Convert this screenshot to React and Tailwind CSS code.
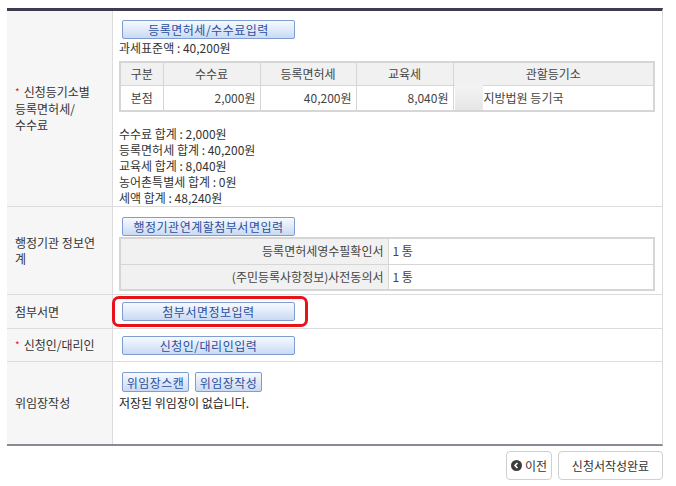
import React from "react";

const font = { fontFamily: '"Noto Sans CJK KR", "Noto Sans", sans-serif' };

function BlueBtn({ children, className = "" }) {
  return (
    <button
      className={`block h-[19px] border border-[#7f9dd0] rounded-[2px] bg-gradient-to-b from-[#f7faff] to-[#c9daf3] text-[12px] leading-[17px] text-[#2b4f9c] tracking-[0.5px] ${className}`}
    >
      {children}
    </button>
  );
}

function Star() {
  return <span className="text-[#e0262b] text-[10px] mr-[4px] relative -top-[1px]">*</span>;
}

function Row({ label, children, className = "", last }) {
  return (
    <div className={`grid grid-cols-[106px_1fr] ${last ? "" : "border-b border-[#dcdcdc]"} ${className}`}>
      <div className="bg-[#f6f6f6] border-r border-[#dcdcdc] flex items-center px-[8px] text-[12px] leading-[16px] text-[#333]">
        {label}
      </div>
      <div className="px-[6px] text-[12px] leading-[16px]">{children}</div>
    </div>
  );
}

export default function App() {
  const sums = [
    "수수료 합계 : 2,000원",
    "등록면허세 합계 : 40,200원",
    "교육세 합계 : 8,040원",
    "농어촌특별세 합계 : 0원",
    "세액 합계 : 48,240원",
  ];

  return (
    <div className="w-[676px] h-[486px] bg-white pt-[8px] pl-[7px] text-[#333]" style={font}>
      <div className="w-[656px] border-t-[3px] border-t-[#3d3d4f] border-b-2 border-b-[#8a8a92] border-r border-r-[#dcdcdc]">
        <Row label={<span><Star />신청등기소별<br />등록면허세/<br />수수료</span>} className="h-[196px]">
          <div className="pt-[9px]">
            <BlueBtn className="ml-[3px] w-[173px]">등록면허세/수수료입력</BlueBtn>
            <div className="mt-[1px]">과세표준액 : 40,200원</div>
            <table className="mt-[5px] w-[536px] border-2 border-[#d6d6d6] border-collapse text-[#444]">
              <thead>
                <tr className="bg-[#f1f1f1] h-[23px]">
                  <th className="font-normal border border-[#d6d6d6] w-[43px]">구분</th>
                  <th className="font-normal border border-[#d6d6d6] w-[97px]">수수료</th>
                  <th className="font-normal border border-[#d6d6d6] w-[96px]">등록면허세</th>
                  <th className="font-normal border border-[#d6d6d6] w-[97px]">교육세</th>
                  <th className="font-normal border border-[#d6d6d6]">관할등기소</th>
                </tr>
              </thead>
              <tbody>
                <tr className="h-[26px]">
                  <td className="border border-[#d6d6d6] text-center">본점</td>
                  <td className="border border-[#d6d6d6] text-right pr-[4px]">2,000원</td>
                  <td className="border border-[#d6d6d6] text-right pr-[4px]">40,200원</td>
                  <td className="border border-[#d6d6d6] text-right pr-[4px]">8,040원</td>
                  <td className="border border-[#d6d6d6] p-0">
                    <div className="flex items-center h-[24px]">
                      <span className="w-[28px] h-[25px] bg-gradient-to-b from-[#f4f4f4] to-[#e6e6e6] ml-[1px] mr-[1px]" />
                      <span>지방법원 등기국</span>
                    </div>
                  </td>
                </tr>
              </tbody>
            </table>
            <div className="mt-[14px]">
              {sums.map((s) => (
                <div key={s}>{s}</div>
              ))}
            </div>
          </div>
        </Row>

        <Row label="행정기관 정보연계" className="h-[88px]">
          <div className="pt-[10px]">
            <BlueBtn className="ml-[3px] w-[173px]">행정기관연계할첨부서면입력</BlueBtn>
            <table className="mt-[1px] w-[536px] border-2 border-[#d6d6d6] border-collapse text-[#444]">
              <tbody>
                <tr className="h-[26px]">
                  <td className="bg-[#f1f1f1] border border-[#d6d6d6] text-right pr-[4px] w-[268px]">등록면허세영수필확인서</td>
                  <td className="border border-[#d6d6d6] pl-[4px]">1 통</td>
                </tr>
                <tr className="h-[26px]">
                  <td className="bg-[#f1f1f1] border border-[#d6d6d6] text-right pr-[4px]">(주민등록사항정보)사전동의서</td>
                  <td className="border border-[#d6d6d6] pl-[4px]">1 통</td>
                </tr>
              </tbody>
            </table>
          </div>
        </Row>

        <Row label="첨부서면" className="h-[34px]">
          <div className="h-full flex items-center relative">
            <div className="absolute -left-[7px] top-[1px] w-[196px] h-[31px] border-[3px] border-[#e8121a] rounded-[7px]" />
            <BlueBtn className="ml-[3px] w-[173px]">첨부서면정보입력</BlueBtn>
          </div>
        </Row>

        <Row label={<span><Star />신청인/대리인</span>} className="h-[33px]">
          <div className="h-full flex items-center">
            <BlueBtn className="ml-[3px] w-[173px]">신청인/대리인입력</BlueBtn>
          </div>
        </Row>

        <Row label="위임장작성" className="h-[82px]" last>
          <div className="pt-[10px]">
            <div className="flex gap-[6px] ml-[3px]">
              <BlueBtn className="w-[67px] h-[20px]">위임장스캔</BlueBtn>
              <BlueBtn className="w-[67px] h-[20px]">위임장작성</BlueBtn>
            </div>
            <div className="mt-[3px] text-[#222]">저장된 위임장이 없습니다.</div>
          </div>
        </Row>
      </div>

      <div className="w-[656px] flex justify-end gap-[6px] mt-[5px]">
        <button className="h-[29px] w-[46px] border border-[#cfcfcf] rounded-[4px] bg-white text-[12px] text-[#333] flex items-center justify-center gap-[3px]">
          <svg width="11" height="11" viewBox="0 0 12 12">
            <circle cx="6" cy="6" r="6" fill="#3c3c3c" />
            <path d="M7 3.3L4.4 6L7 8.7" stroke="#fff" strokeWidth="1.8" fill="none" />
          </svg>
          이전
        </button>
        <button className="h-[29px] w-[105px] border border-[#cfcfcf] rounded-[4px] bg-white text-[12px] text-[#333]">
          신청서작성완료
        </button>
      </div>
    </div>
  );
}
